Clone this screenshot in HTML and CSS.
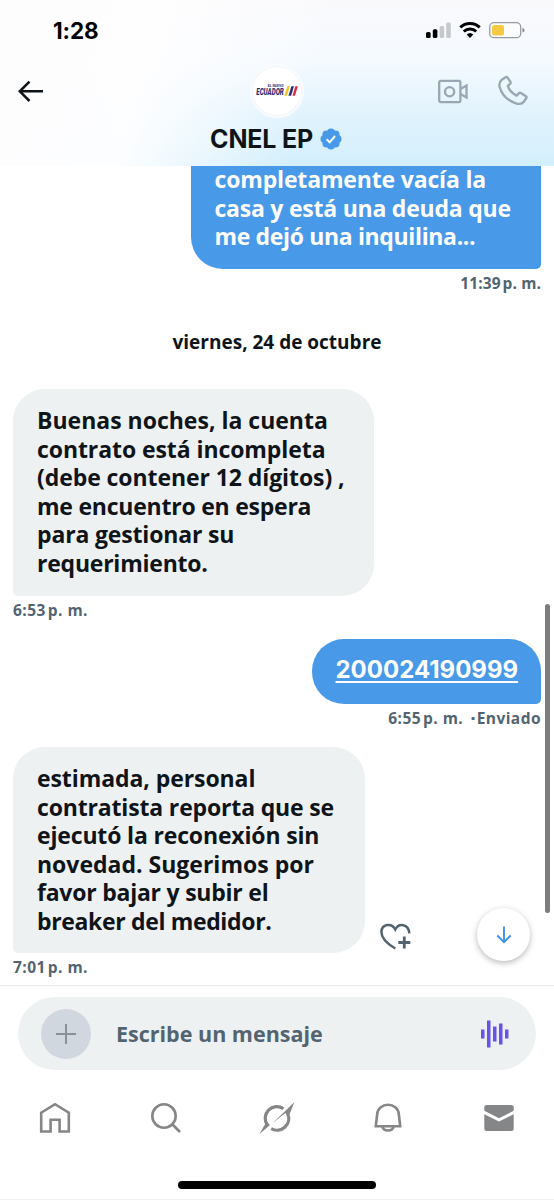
FILE: index.html
```html
<!DOCTYPE html>
<html lang="es">
<head>
<meta charset="utf-8">
<title>CNEL EP</title>
<link rel="stylesheet" href="styles.css">
</head>
<body>
<div class="screen">
  <header class="top">
    <div class="status">
      <span class="clock">1:28</span>
      <svg class="status-icons" viewBox="0 0 102 20" width="102" height="20">
        <rect x="1" y="12" width="4.6" height="6" rx="1.5"/><rect x="7.8" y="9.3" width="4.6" height="8.7" rx="1.5"/>
        <rect x="14.6" y="6" width="4.6" height="12" rx="1.5" fill="#c6c9cc"/><rect x="21.2" y="2.5" width="4.6" height="15.5" rx="1.5" fill="#c6c9cc"/>
        <g fill="none" stroke="#000" stroke-width="3.1"><path d="M35.3 7.4a14.2 14.2 0 0 1 19.4 0"/><path d="M38.8 11.5a9 9 0 0 1 12.4 0"/></g>
        <path d="M45 18l-3.3-3.4a4.8 4.8 0 0 1 6.6 0z"/>
        <rect x="64.7" y="2.7" width="31" height="15" rx="4.3" fill="#fff" fill-opacity=".5" stroke="#989ba0" stroke-width="1.3"/>
        <rect x="67" y="5" width="12" height="10.5" rx="2" fill="#f6c945"/>
        <path d="M97.5 7.8q2 .7 2 2.4t-2 2.4z" fill="#85888c"/>
      </svg>
    </div>
    <div class="bar">
      <svg class="back" viewBox="0 0 28 24" width="28" height="24" fill="none" stroke="#0f1419" stroke-width="2.5"><path d="M26 12.300H3M12.500 2.600L2.800 12.300l9.700 9.700"/></svg>
      <div class="avatar"><div class="logo"><span class="logo-top">EL NUEVO</span><span class="logo-name">ECUADOR</span></div>
        <svg viewBox="0 0 15 12" width="14" height="12"><path d="M3.500 1h2.800L3.200 11H.4z" fill="#f2c531"/><path d="M7.900 1h2.800L7.600 11H4.800z" fill="#2b2d72"/><path d="M12.100 1h2.800l-3.100 10H9z" fill="#d5304b"/></svg>
      </div>
      <div class="calls">
        <svg viewBox="0 0 32 26" width="32" height="26" fill="none" stroke="#9aa7b2" stroke-width="2.300"><rect x="2.200" y="2.900" width="21.200" height="21.200" rx="1.500"/><circle cx="12.600" cy="13.700" r="4.600"/><path d="M23.500 11l6-3.500v12l-6-3.500"/></svg>
        <svg viewBox="0 0 32 32" width="32" height="32" fill="none" stroke="#9aa7b2" stroke-width="2.400" stroke-linejoin="round"><path d="M4.800 4.700l3.800-2.500q1-.6 1.900.4l2.900 4.200q.7 1.200-.3 2l-2.300 2q1.300 5.700 8.800 9.800l2.500-2.500q.8-.7 1.800-.1l5 3.200q1.100.7.400 1.800l-2.500 3.800q-2.300 3.200-7.900 1.500Q5.800 23.800 2.600 11.700 1.700 7 4.800 4.700z"/></svg>
      </div>
    </div>
    <div class="title">
      <h1>CNEL EP</h1>
      <svg viewBox="0 0 22 22" width="22" height="22"><g fill="#4999e9"><circle cx="11" cy="4.500" r="4"/><circle cx="15.600" cy="6.400" r="4"/><circle cx="17.500" cy="11" r="4"/><circle cx="15.600" cy="15.600" r="4"/><circle cx="11" cy="17.500" r="4"/><circle cx="6.400" cy="15.600" r="4"/><circle cx="4.500" cy="11" r="4"/><circle cx="6.400" cy="6.400" r="4"/><circle cx="11" cy="11" r="7"/></g><path d="M6.600 11.300l3 3 5.500-6.300" fill="none" stroke="#fff" stroke-width="2"/></svg>
    </div>
  </header>

  <main class="chat">
    <div class="bubble out cut">
      <span class="snug">completamente vacía la</span><span class="tight">casa y está una deuda que</span><span class="tighter">me dejó una inquilina...</span>
    </div>
    <time class="end late">11:39<i></i>p. m.</time>
    <div class="day">viernes, 24 de octubre</div>
    <div class="bubble in first">
      <span>Buenas noches, la cuenta</span><span class="near">contrato está incompleta</span><span class="near">(debe contener 12 dígitos) ,</span><span class="tight">me encuentro en espera</span><span class="snug">para gestionar su</span><span class="tight">requerimiento.</span>
    </div>
    <time>6:53<i></i>p. m.</time>
    <div class="bubble out number"><span>200024190999</span></div>
    <time class="end">6:55<i></i>p. m. <b>·</b>Enviado</time>
    <div class="row">
      <div class="bubble in second">
        <span class="near">estimada, personal</span><span class="snug">contratista reporta que se</span><span class="snug">ejecutó la reconexión sin</span><span>novedad. Sugerimos por</span><span class="tight">favor bajar y subir el</span><span class="tighter">breaker del medidor.</span>
      </div>
      <svg class="react" viewBox="0 0 32 28" width="32" height="28" fill="none" stroke="#536471" stroke-width="2.500"><path d="M15.300 25.500C6.500 20.300 1.300 14.800 1.400 8.800 1.800 1.200 11.500-.7 15.300 6.500 18.500 0 28.500.3 29.300 10.300"/><path d="M24.300 13.500v12M18.300 19.500h12" stroke-width="2.800"/></svg>
    </div>
    <time>7:01<i></i>p. m.</time>
    <div class="scrollbar"></div>
    <div class="jump"><svg viewBox="0 0 16 18" width="16" height="18" fill="none" stroke="#3d91e8" stroke-width="1.900"><path d="M8 .5v15.300M1.300 9.500L8 16.200l6.700-6.700"/></svg></div>
  </main>

  <footer>
    <div class="composer">
      <div class="plus"><svg viewBox="0 0 20 20" width="20" height="20" stroke="#8a9097" stroke-width="2"><path d="M10 0v20M0 10h20"/></svg></div>
      <span class="placeholder">Escribe un mensaje</span>
      <svg class="wave" viewBox="0 0 28 28" width="28" height="28" fill="#6b52e6"><rect x="0" y="9.500" width="3.500" height="9"/><rect x="6" y=".5" width="3.500" height="27"/><rect x="12" y="6.500" width="3.500" height="15"/><rect x="18" y="3.500" width="3.500" height="21"/><rect x="24" y="9.500" width="3.500" height="9"/></svg>
    </div>
    <nav>
      <svg viewBox="0 0 32 32" width="32" height="32" fill="none" stroke="#858688" stroke-width="2.600"><path d="M2.200 29.500V10.700L16 2.200l13.800 8.500v18.800h-9.200V17.800h-9v11.700z"/></svg>
      <svg viewBox="0 0 32 32" width="32" height="32" fill="none" stroke="#858688" stroke-width="2.600"><circle cx="14" cy="14" r="11.700"/><path d="M22 22l8 8"/></svg>
      <svg viewBox="0 0 38 34" width="38" height="34" fill="#858688"><g fill="none" stroke="#858688" stroke-width="3.200"><path d="M25.500 7.700A11.700 11.700 0 0 0 9.400 24.200"/><path d="M13.200 27.700A11.700 11.700 0 0 0 29.800 13"/></g><path d="M7.600 22.300L1.500 33 11.800 24.300 10.200 22z"/><path d="M14.500 22.300L36.500 1 31.200 14 28.400 13.800 27.400 12z"/></svg>
      <svg viewBox="0 0 32 32" width="32" height="32" fill="none" stroke="#858688" stroke-width="2.600"><path d="M3.800 24.200L5.200 12C5.800 6.200 10.500 2.800 16 2.800s10.200 3.400 10.800 9.200l1.400 12.200zM10.300 24.200a5.800 5.300 0 0 0 11.400 0"/></svg>
      <svg viewBox="0 0 32 32" width="32" height="32" fill="#858688"><path d="M1.300 5.500q0-2.500 2.500-2.500h24.400q2.500 0 2.500 2.500v3.300L16 16.200 1.300 8.800z"/><path d="M1.300 12.200L16 19.500l14.700-7.300v14.300q0 2.500-2.500 2.500H3.800q-2.500 0-2.500-2.500z"/></svg>
    </nav>
    <div class="home-indicator"></div>
  </footer>
</div>
</body>
</html>
```
FILE: styles.css
```css
* { box-sizing: border-box; }
body { margin: 0; background: #fff; font-family: "Open Sans", "Liberation Sans", sans-serif; font-weight: 750; color: #0f1419; }
svg { display: block; flex: none; }
.screen { width: 554px; height: 1200px; display: flex; flex-direction: column; overflow: hidden; }

.top { height: 166px; flex: none; background: linear-gradient(108deg, rgba(253,253,254,1) 0, rgba(254,254,255,.97) 28%, rgba(254,254,255,0) 56%), linear-gradient(180deg, #f9f9fb 0, #f5faff 35%, #e0f3fd 70%, #d3effc 100%); }
.status { height: 60px; padding: 0 27px 0 53px; display: flex; align-items: center; justify-content: space-between; }
.clock { font: 700 22.5px Inter, sans-serif; letter-spacing: -.1px; color: #000; }
.bar { height: 62px; padding: 0 16px; display: grid; grid-template-columns: 1fr 54px 1fr; align-items: center; }
.avatar { width: 54px; height: 54px; border-radius: 50%; background: #fff; box-shadow: inset 0 0 0 2px #f9fcfe, inset 0 0 0 3px #f3f5f7; display: flex; align-items: center; justify-content: center; }
.logo { width: 27px; display: flex; flex-direction: column; align-items: flex-end; font-family: Roboto, sans-serif; font-style: italic; color: #2b2d72; margin-top: -3px; }
.logo-top { font-size: 3.5px; line-height: 4px; }
.logo-name { font-size: 9.5px; line-height: 8px; font-weight: 900; transform: scaleX(.66); transform-origin: right; }
.calls { display: flex; gap: 28px; justify-content: flex-end; align-items: center; margin-right: 9.5px; }
.back { margin-left: .5px; }
.title { height: 34px; display: flex; justify-content: center; align-items: center; gap: 7px; margin-right: 2px; }
h1 { margin: 0; font: 700 25px/34px Inter, sans-serif; letter-spacing: -.2px; }

.chat { height: 819px; flex: none; position: relative; display: flex; flex-direction: column; align-items: flex-start; }
.chat > * { flex: none; }
.bubble { padding: 17px 24px 18px; border-radius: 32px; font-size: 23px; line-height: 28.6px; }
.bubble span { display: block; white-space: nowrap; width: max-content; }
.bubble .near { letter-spacing: -.08px; }
.bubble .snug { letter-spacing: -.16px; }
.bubble .tight { letter-spacing: -.23px; }
.bubble .tighter { letter-spacing: -.35px; }
.in { background: #eef1f2; border-bottom-left-radius: 5px; margin-left: 13px; }
.out { background: #4999e9; color: #fff; border-bottom-right-radius: 5px; margin-right: 13px; align-self: flex-end; }
.cut { width: 350.5px; height: 103px; padding-top: 0; border-top-left-radius: 0; border-top-right-radius: 0; }
.cut span:first-child { margin-top: -1px; }
.first { width: 361px; height: 207px; }
.number { width: 229.5px; height: 65px; font-family: Inter, sans-serif; font-size: 24px; text-decoration: underline; text-decoration-thickness: 2px; text-underline-offset: 3px; }
.second { width: 352px; height: 206px; }
.row { display: flex; align-items: flex-end; gap: 15px; }
.react { margin-bottom: 2px; }
time { display: block; margin: 5px 13px 18px; height: 20px; font-size: 15.5px; line-height: 19px; letter-spacing: .45px; color: #536471; white-space: nowrap; }
time.end { align-self: flex-end; }
time.late { letter-spacing: .1px; }
time i { display: inline-block; width: 2px; }
time b { margin-left: 3px; margin-right: 1px; }
.day { align-self: center; margin: 20px 0 37px; height: 20px; font-size: 19px; line-height: 20px; white-space: nowrap; }
.scrollbar { position: absolute; right: 4px; top: 438px; width: 5px; height: 309px; border-radius: 3px; background: #7d7d7d; }
.jump { position: absolute; right: 24px; top: 742px; width: 53px; height: 53px; border-radius: 50%; background: #fff; box-shadow: 0 2px 6px rgba(0,0,0,.28); display: flex; align-items: center; justify-content: center; }

footer { flex: 1; border-top: 1px solid #e9ebec; border-bottom: 1px solid #f0f0f1; padding-top: 11px; background: #fff; }
.composer { margin: 0 18px; height: 73px; border-radius: 37px; background: #eef1f2; display: flex; align-items: center; padding: 0 27px 0 23px; }
.plus { width: 50px; height: 50px; border-radius: 50%; background: #d0d7de; display: flex; align-items: center; justify-content: center; }
.placeholder { margin-left: 25px; font-size: 21.5px; color: #536471; white-space: nowrap; }
.wave { margin-left: auto; }
nav { display: grid; grid-template-columns: repeat(5, 1fr); justify-items: center; align-items: center; height: 96px; }
.home-indicator { width: 198px; height: 8px; border-radius: 4px; background: #000; margin: 15px auto 0; }
```
